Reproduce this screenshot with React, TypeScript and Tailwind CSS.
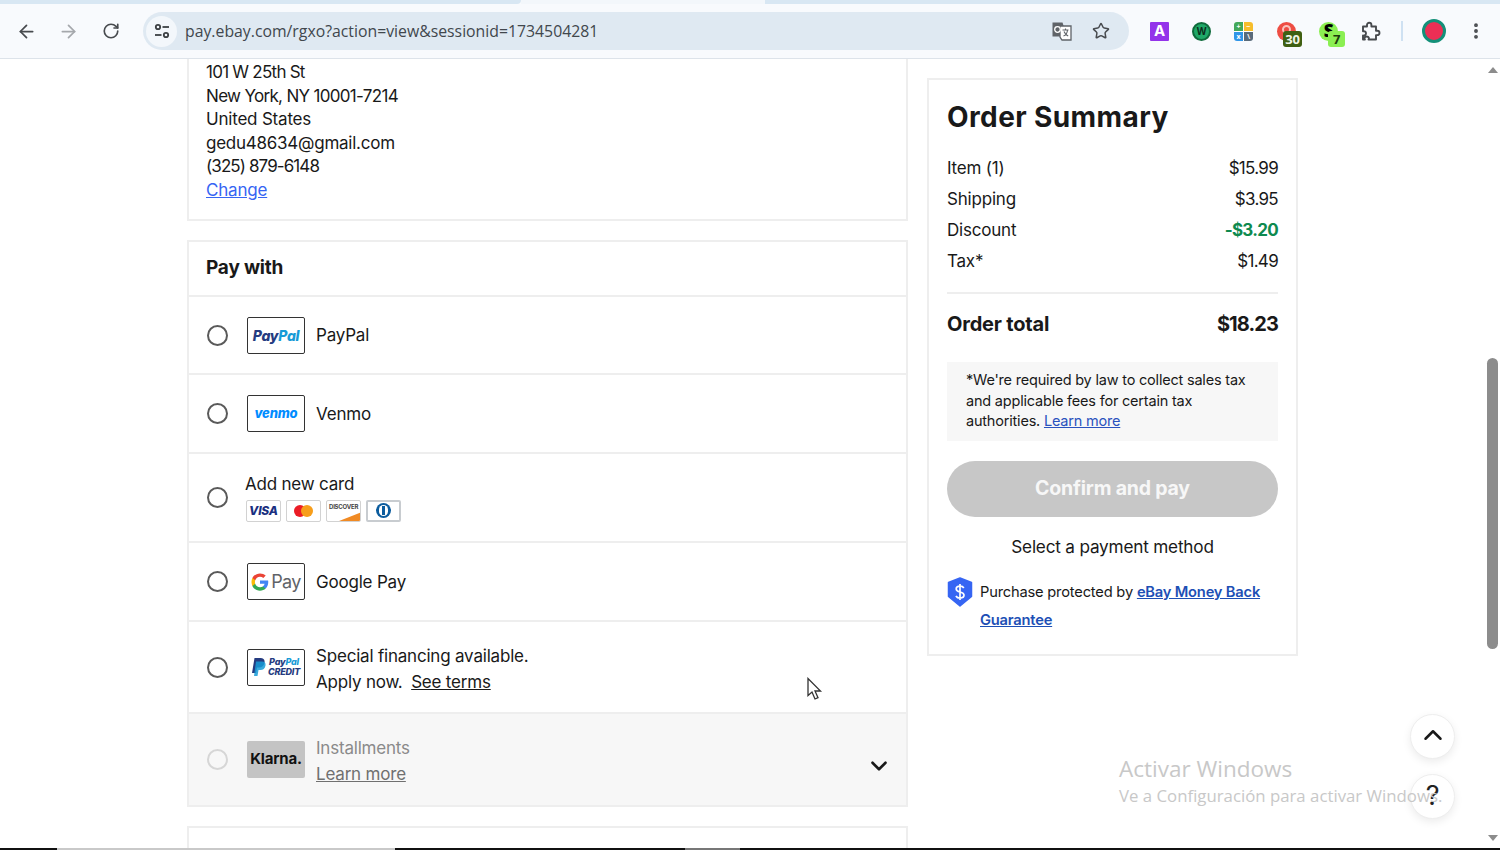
import { ArrowLeft, ArrowRight, ChevronDown, ChevronUp, EllipsisVertical, RotateCw, Star } from "lucide-react";

const Radio = ({ muted }: { muted?: boolean }) => (
  <span className={`w-[21px] h-[21px] rounded-full shrink-0 border-2 ${muted ? "border-[#d6d6d6]" : "border-[#5a5a5a]"}`} />
);

const LogoBox = ({ children, muted }: { children: React.ReactNode; muted?: boolean }) => (
  <span
    className={`w-[58px] h-[37px] rounded-[2px] shrink-0 flex items-center justify-center ${
      muted ? "bg-[#c4c4c4]" : "border border-[#333] bg-white"
    }`}
  >
    {children}
  </span>
);

const PayRow = ({ logo, children, height, muted, textPad }: { logo: React.ReactNode; children: React.ReactNode; height: string; muted?: boolean; textPad?: string }) => (
  <div className={`flex items-center pl-[18px] border-t-2 border-[#eeeeee] ${muted ? "bg-[#f7f7f7]" : ""} ${height}`}>
    <Radio muted={muted} />
    <span className="ml-[19px]">{logo}</span>
    <div className={`ml-[11px] ${textPad ?? "pt-[2px]"}`}>{children}</div>
  </div>
);

const GoogleG = () => (
  <svg width="18" height="18" viewBox="0 0 48 48">
    <path fill="#4285F4" d="M46 24.5c0-1.6-.1-3.1-.4-4.5H24v8.6h12.3c-.5 2.8-2.1 5.200-4.500 6.800v5.600h7.300C43.400 37 46 31.300 46 24.500z" />
    <path fill="#34A853" d="M24 47c6.100 0 11.300-2 15.100-5.500l-7.300-5.600c-2 1.400-4.700 2.200-7.800 2.200-6 0-11-4-12.800-9.500H3.700v5.800C7.500 42 15.200 47 24 47z" />
    <path fill="#FBBC05" d="M11.200 28.600c-.5-1.400-.7-3-.7-4.600s.3-3.200.7-4.600v-5.800H3.700C2.200 16.600 1.300 20.200 1.300 24s.9 7.400 2.400 10.400l7.500-5.800z" />
    <path fill="#EA4335" d="M24 9.900c3.400 0 6.400 1.200 8.800 3.400l6.500-6.500C35.300 3.100 30.100 1 24 1 15.200 1 7.500 6 3.700 13.600l7.500 5.800C13 13.900 18 9.900 24 9.900z" />
  </svg>
);

const CardChip = ({ children, wide }: { children: React.ReactNode; wide?: boolean }) => (
  <span
    className={`h-[22px] rounded-[2px] bg-white flex items-center justify-center overflow-hidden relative ${
      wide ? "w-[35px] border-2 border-[#c8ccd0]" : "w-[35px] border border-[#d2d2d2]"
    }`}
  >
    {children}
  </span>
);

const SummaryLine = ({ label, value, green }: { label: string; value: string; green?: boolean }) => (
  <div className="flex justify-between items-center h-[31px] text-[17px]">
    <span>{label}</span>
    <span className={`tracking-[-0.7px] ${green ? "font-bold text-[#0e8a4f]" : ""}`}>{value}</span>
  </div>
);

const ExtBadge = ({ bg, color, pos, children }: { bg: string; color: string; pos: string; children: React.ReactNode }) => (
  <span className={`absolute -bottom-[6px] h-[16px] rounded-[3px] text-[13px] font-bold leading-[16px] text-center tracking-[-0.3px] ${pos} ${bg} ${color}`}>
    {children}
  </span>
);

function Toolbar() {
  return (
    <div className="shrink-0 h-[59px] bg-[#f8fafd] border-b border-[#dde3ea] font-['Open_Sans',sans-serif]">
      <div className="flex h-[4px]">
        <div className="w-[521px] bg-[#d8e7f3] rounded-br-[4px]" />
        <div className="w-[244px] bg-[#f3f7fb]" />
        <div className="flex-1 bg-[#d8e7f3]" />
      </div>
      <div className="flex items-center h-[54px] pl-[16px]">
        <ArrowLeft size={21} strokeWidth={2} className="text-[#474a4e]" />
        <ArrowRight size={21} strokeWidth={2} className="ml-[21px] text-[#a5a8ac]" />
        <RotateCw size={18} strokeWidth={2.2} className="ml-[23px] text-[#474a4e]" />
        <div className="ml-[23px] w-[986px] h-[38px] rounded-full bg-[#dfe9f2] flex items-center pl-[3px]">
          <span className="w-[31px] h-[31px] rounded-full bg-[#f3f7fb] flex items-center justify-center">
            <svg width="18" height="18" viewBox="0 0 18 18" fill="none" stroke="#3c4043" strokeWidth="1.8">
              <circle cx="5" cy="5" r="2.2" />
              <path d="M9.500 5H16" />
              <path d="M2 13h6.500" />
              <circle cx="13" cy="13" r="2.200" />
            </svg>
          </span>
          <span className="ml-[8px] pt-[1px] text-[15.8px] tracking-normal text-[#41474d]">pay.ebay.com/rgxo?action=view&amp;sessionid=1734504281</span>
          <svg className="ml-auto -translate-x-[1px]" width="22" height="22" viewBox="0 0 22 22">
            <path d="M1.500 2.500h10l1 3v11h-11z" fill="#5f6368" />
            <path d="M9 6h11v14H11l-2-3z" fill="#fff" stroke="#5f6368" strokeWidth="1.300" />
            <circle cx="6.500" cy="9.500" r="2.800" fill="none" stroke="#fff" strokeWidth="1.300" />
            <path d="M11.500 10h6M14.500 8.500V10M12.500 16c2.500-1 3.800-3 4-6M13 11.500c.8 2 2.200 3.500 4.200 4.500" fill="none" stroke="#5f6368" strokeWidth="1.100" />
          </svg>
          <Star size={18} strokeWidth={2} className="ml-[18px] mr-[19px] text-[#474a4e]" />
        </div>
        <div className="ml-[21px] w-[19px] h-[19px] rounded-[1px] bg-[#9333ea] text-white flex items-center justify-center text-[15px] font-bold font-['Inter',sans-serif]">A</div>
        <div className="ml-[23px] w-[19px] h-[19px] rounded-full bg-[#1fa868] border-2 border-[#0f6b3c] flex items-center justify-center text-[10px] font-bold text-[#0b2d1b]">W</div>
        <div className="ml-[23px] w-[19px] h-[19px] rounded-[3px] overflow-hidden grid grid-cols-2 grid-rows-2 gap-[1px] bg-white text-[7px] font-bold text-white leading-[9px] text-center">
          <span className="bg-[#43a85a]">+</span>
          <span className="bg-[#f6bd2c]">−</span>
          <span className="bg-[#2f95e8]">x</span>
          <span className="bg-[#5a6b7b]">\</span>
        </div>
        <div className="ml-[24px] relative w-[19px] h-[19px] rounded-full bg-[#ee4d43]">
          <span className="absolute left-[5px] top-[3px] w-[9px] h-[9px] rounded-full border-2 border-[#f9c3bd]" />
          <ExtBadge bg="bg-[#3f5f12]" color="text-[#f1f5e6]" pos="-right-[6px] w-[19px]">30</ExtBadge>
        </div>
        <div className="ml-[23px] relative w-[19px] h-[19px] rounded-full bg-[#8bef52] flex items-center justify-center text-[17px] font-black text-black">
          S
          <ExtBadge bg="bg-[#8bef52]" color="text-[#1d3b0c]" pos="-right-[7px] w-[17px]">7</ExtBadge>
        </div>
        <svg className="ml-[23px]" width="20" height="20" viewBox="0 0 20 20" fill="none" stroke="#474a4e" strokeWidth="1.900" strokeLinejoin="round">
          <path d="M2 5.500h4V4a2.200 2.200 0 0 1 4.400 0v1.500h4.600v4.200h1.300a2.200 2.200 0 0 1 0 4.400H15v4.400H7.500c.8-1 .6-3-1.800-3s-2.600 2-1.800 3H2v-4c1.800.4 3-.8 3-2.300S3.800 10 2 10.400z" />
        </svg>
        <div className="ml-[20px] w-[2px] h-[20px] bg-[#cfe1f2]" />
        <div className="ml-[19px] w-[24px] h-[24px] rounded-full bg-[#ec2f55] border-[3px] border-[#149079]" />
        <EllipsisVertical size={20} strokeWidth={2.6} className="ml-[20px] text-[#474a4e]" />
      </div>
    </div>
  );
}

function PaymentColumn() {
  return (
    <div className="w-[721px] shrink-0">
      <div className="h-[162px] border-x-2 border-b-2 border-[#eeeeee] pl-[17px] pt-[2px] text-[17px] leading-[23.5px]">
        <div className="tracking-[-0.75px]">101 W 25th St</div>
        <div className="tracking-[-0.68px]">New York, NY 10001-7214</div>
        <div>United States</div>
        <div className="tracking-[-0.25px]">gedu48634@gmail.com</div>
        <div className="tracking-[-0.9px]">(325) 879-6148</div>
        <a className="text-[#3665f3] underline">Change</a>
      </div>

      <div className="mt-[19px] border-x-2 border-t-2 border-b-2 border-[#eeeeee]">
        <div className="h-[53px] pb-[1px] flex items-center pl-[17px] text-[19px] font-bold">Pay with</div>
        <PayRow
          height="h-[78px]"
          logo={
            <LogoBox>
              <span className="text-[14px] font-extrabold italic tracking-[-0.3px] text-[#253b80]">
                Pay<span className="text-[#179bd7]">Pal</span>
              </span>
            </LogoBox>
          }
        >
          <span className="text-[17px]">PayPal</span>
        </PayRow>
        <PayRow
          height="h-[79px]"
          logo={
            <LogoBox>
              <span className="text-[13px] font-extrabold italic text-[#008cff]">venmo</span>
            </LogoBox>
          }
        >
          <span className="text-[17px]">Venmo</span>
        </PayRow>
        <div className="h-[89px] flex items-center pl-[18px] border-t-2 border-[#eeeeee]">
          <Radio />
          <div className="ml-[17px] -mt-[2px]">
            <div className="text-[17px] leading-[24px]">Add new card</div>
            <div className="flex gap-[5px] mt-[4px] ml-[1px]">
              <CardChip>
                <span className="text-[12px] font-extrabold italic text-[#1a2f80]">VISA</span>
              </CardChip>
              <CardChip>
                <span className="w-[12px] h-[12px] rounded-full bg-[#eb1c26]" />
                <span className="w-[12px] h-[12px] rounded-full bg-[#f79e1b] -ml-[5px]" />
              </CardChip>
              <CardChip>
                <span className="absolute top-[2px] left-[2px] text-[6px] leading-[8px] font-bold text-[#444]">DISCOVER</span>
                <svg className="absolute inset-0" viewBox="0 0 35 22" width="35" height="22">
                  <path d="M7 22 35 11v11z" fill="#f08a24" />
                </svg>
              </CardChip>
              <CardChip wide>
                <span className="w-[15px] h-[15px] rounded-full bg-[#0b5c9e] flex items-center justify-center">
                  <span className="w-[9px] h-[11px] rounded-full bg-white flex items-center justify-center">
                    <span className="w-[3px] h-[9px] bg-[#0b5c9e]" />
                  </span>
                </span>
              </CardChip>
            </div>
          </div>
        </div>
        <PayRow
          height="h-[79px]"
          logo={
            <LogoBox>
              <span className="flex items-center gap-[2px]">
                <GoogleG />
                <span className="text-[18px] text-[#5f6368] tracking-[-0.6px]">Pay</span>
              </span>
            </LogoBox>
          }
        >
          <span className="text-[17px]">Google Pay</span>
        </PayRow>
        <PayRow
          height="h-[92px]"
          textPad="pt-[4px]"
          logo={
            <LogoBox>
              <span className="flex items-center gap-[2px]">
                <svg width="14" height="18" viewBox="0 0 14 18">
                  <path d="M2.500 0h6c3 0 4.500 1.800 4 4.500C12 8 10 9.500 7 9.500H5L4 15H0z" fill="#253b80" />
                  <path d="M4 3.500h6c2.500 0 4 1.500 3.500 4C13 10.500 11 12 8.500 12H6.500l-1 6H2z" fill="#179bd7" opacity="0.85" />
                </svg>
                <span className="flex flex-col items-center text-[9px] leading-[10px] font-extrabold italic">
                  <span className="text-[#179bd7]">
                    <span className="text-[#253b80]">Pay</span>Pal
                  </span>
                  <span className="text-[#253b80]">CREDIT</span>
                </span>
              </span>
            </LogoBox>
          }
        >
          <div className="text-[17px] leading-[26px]">Special financing available.</div>
          <div className="text-[17px] leading-[26px]">
            Apply now. <a className="ml-[4px] underline">See terms</a>
          </div>
        </PayRow>
        <PayRow
          height="h-[93px]"
          muted
          textPad="pt-[3px]"
          logo={
            <LogoBox muted>
              <span className="text-[15px] font-bold tracking-[-0.2px] text-[#111]">Klarna.</span>
            </LogoBox>
          }
        >
          <div className="text-[17px] leading-[26px] text-[#8a8a8a]">Installments</div>
          <a className="block text-[17px] leading-[26px] text-[#707070] underline">Learn more</a>
        </PayRow>
      </div>
      <div className="mt-[19px] h-[40px] border-x-2 border-t-2 border-[#eeeeee]" />
    </div>
  );
}

function OrderSummary() {
  return (
    <div className="w-[371px] h-[578px] mt-[19px] shrink-0 border-2 border-[#eeeeee] px-[18px] pt-[18px]">
      <h1 className="text-[28px] leading-[38px] font-bold tracking-[0.4px]">Order Summary</h1>
      <div className="mt-[17px]">
        <SummaryLine label="Item (1)" value="$15.99" />
        <SummaryLine label="Shipping" value="$3.95" />
        <SummaryLine label="Discount" value="-$3.20" green />
        <SummaryLine label="Tax*" value="$1.49" />
      </div>
      <div className="mt-[15px] h-[2px] bg-[#eeeeee]" />
      <div className="mt-[16px] flex justify-between items-center text-[20px] leading-[28px] font-bold">
        <span>Order total</span>
        <span className="tracking-[-0.9px]">$18.23</span>
      </div>
      <div className="mt-[24px] h-[79px] bg-[#f7f7f7] pl-[19px] pt-[8px] text-[14.5px] leading-[20.5px]">
        *We're required by law to collect sales tax
        <br />
        and applicable fees for certain tax
        <br />
        authorities. <a className="text-[#2a52be] underline">Learn more</a>
      </div>
      <div className="mt-[20px] h-[56px] pb-[1px] rounded-full bg-[#c7c7c7] flex items-center justify-center text-[19.5px] font-bold text-[#f7f7f7]">
        Confirm and pay
      </div>
      <div className="mt-[17px] text-center text-[17.2px] leading-[26px]">Select a payment method</div>
      <div className="mt-[18px] flex">
        <svg className="shrink-0 -mt-[1px]" width="26" height="30" viewBox="0 0 26 30">
          <path d="M13 1 24.500 5.500v14L13 29 1.500 19.500v-14z" fill="#3665f3" strokeLinejoin="round" stroke="#3665f3" strokeWidth="1.500" />
          <path d="M16.800 11c-.7-1.300-2.100-1.900-3.800-1.900-2.100 0-3.800 1-3.800 2.900 0 4 7.800 2.100 7.800 6.100 0 1.900-1.700 3-4 3-1.900 0-3.300-.8-4.100-2.100M13 7v16" fill="none" stroke="#fff" strokeWidth="1.700" />
        </svg>
        <div className="ml-[7px] text-[14.7px] leading-[28px]">
          <div>
            Purchase protected by <a className="font-semibold text-[#1d4fb5] underline">eBay Money Back</a>
          </div>
          <div>
            <a className="font-semibold text-[#1d4fb5] underline">Guarantee</a>
          </div>
        </div>
      </div>
    </div>
  );
}

function Scrollbar() {
  return (
    <div className="absolute right-0 top-0 bottom-0 w-[15px] flex flex-col items-center">
      <span className="mt-[8px] w-0 h-0 border-x-[5px] border-x-transparent border-b-[6px] border-b-[#8c8c8c]" />
      <span className="mt-[285px] w-[11px] h-[291px] rounded-full bg-[#8c8c8c]" />
      <span className="mt-auto mb-[7px] w-0 h-0 border-x-[5px] border-x-transparent border-t-[6px] border-t-[#8c8c8c]" />
    </div>
  );
}

export default function App() {
  return (
    <div className="w-[1500px] h-[850px] flex flex-col overflow-hidden bg-white text-[#191919] font-['Inter',sans-serif] tracking-[-0.2px]">
      <Toolbar />
      <div className="relative flex-1 min-h-0 overflow-hidden">
        <div className="flex pl-[187px] gap-[19px]">
          <PaymentColumn />
          <OrderSummary />
        </div>
        <ChevronDown size={26} strokeWidth={2.4} className="absolute left-[866px] top-[694px] text-[#191919]" />
        {/* mouse cursor from the recording */}
        <svg className="absolute left-[806px] top-[618px]" width="18" height="25" viewBox="0 0 18 25">
          <path d="M2 1.500v17l4-3.500 3 7 3-1.300-3-6.700h5.500z" fill="#fff" stroke="#333" strokeWidth="1.300" />
        </svg>
        <div className="absolute left-[1410px] top-[655px] w-[45px] h-[45px] rounded-full bg-white border border-[#eeeeee] shadow-[0_3px_8px_rgba(0,0,0,0.08)] flex items-center justify-center">
          <ChevronUp size={30} strokeWidth={2} className="-translate-y-[2px]" />
        </div>
        <div className="absolute left-[1410px] top-[715px] w-[45px] h-[45px] rounded-full bg-white border border-[#eeeeee] shadow-[0_3px_8px_rgba(0,0,0,0.08)] flex items-center justify-center text-[27px] font-normal text-[#222]">
          ?
        </div>
        {/* watermark sits over the floating buttons */}
        <div className="absolute left-[1119px] top-[696px] text-[22.5px] leading-[28px] text-[#c8c8c8] font-['Open_Sans',sans-serif] tracking-normal">
          Activar Windows
        </div>
        <div className="absolute left-[1119px] top-[726px] text-[16.8px] leading-[22px] whitespace-nowrap text-[#c8c8c8] font-['Open_Sans',sans-serif] tracking-normal">
          Ve a Configuración para activar Windows.
        </div>
        <Scrollbar />
      </div>
      {/* player progress line along the bottom edge */}
      <div className="shrink-0 h-[2px] flex bg-[#111]">
        <div className="ml-[57px] w-[338px] bg-[#c9c9c9]" />
        <div className="ml-[290px] w-[55px] bg-[#777]" />
      </div>
    </div>
  );
}
